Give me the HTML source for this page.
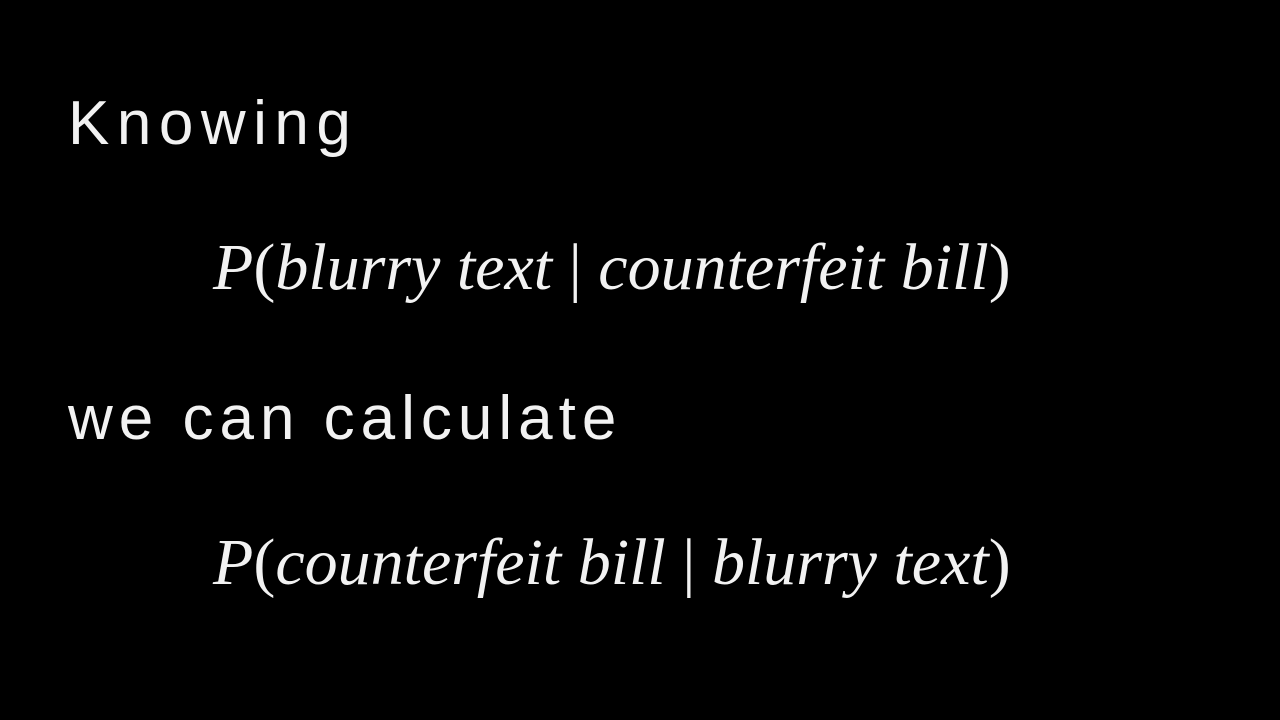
<!DOCTYPE html>
<html><head><meta charset="utf-8"><style>
html,body{margin:0;padding:0;background:#000;width:1280px;height:720px;overflow:hidden}
.t{position:absolute;color:#f2f2f2;line-height:1;white-space:nowrap}
.s{font-family:"Liberation Sans",sans-serif;font-size:62px;letter-spacing:6px;left:68px}
.m{font-family:"Liberation Serif",serif;font-style:italic;font-size:66px;left:213px}
.m span{font-style:normal}
</style></head><body>
<div class="t s" style="top:93px;letter-spacing:7.5px">Knowing</div>
<div class="t m" style="top:235px">P<span>(</span>blurry text <span>|</span> counterfeit bill<span>)</span></div>
<div class="t s" style="top:388px">we can calculate</div>
<div class="t m" style="top:530px">P<span>(</span>counterfeit bill <span>|</span> blurry text<span>)</span></div>
</body></html>
